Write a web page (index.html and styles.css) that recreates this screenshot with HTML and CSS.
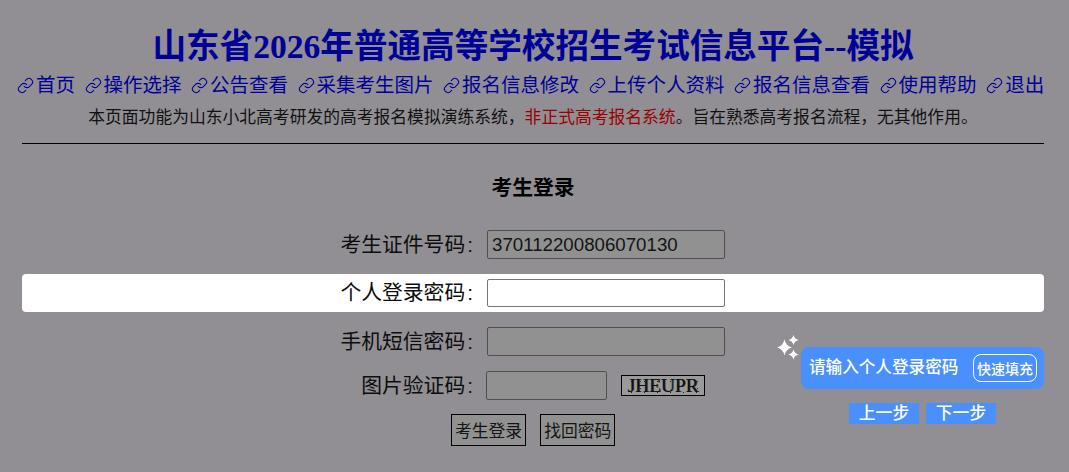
FILE: index.html
```html
<!DOCTYPE html>
<html lang="zh-CN">
<head>
<meta charset="utf-8">
<title>考生登录</title>
<link rel="stylesheet" href="styles.css">
</head>
<body>
<svg class="defs" width="0" height="0"><defs><symbol id="lnk" viewBox="0 0 24 24"><path d="M10 13a5 5 0 0 0 7.540.540l3-3a5 5 0 0 0-7.070-7.070l-1.720 1.710M14 11a5 5 0 0 0-7.540-.540l-3 3a5 5 0 0 0 7.070 7.070l1.710-1.710" fill="none" stroke="currentColor" stroke-width="1.500" stroke-linecap="round" stroke-linejoin="round"/></symbol></defs></svg>
<header class="head">
  <h1 class="title">山东省2026年普通高等学校招生考试信息平台--模拟</h1>
  <nav class="nav">
    <a class="nav-item"><svg class="ico"><use href="#lnk"/></svg>首页</a>
    <a class="nav-item"><svg class="ico"><use href="#lnk"/></svg>操作选择</a>
    <a class="nav-item"><svg class="ico"><use href="#lnk"/></svg>公告查看</a>
    <a class="nav-item"><svg class="ico"><use href="#lnk"/></svg>采集考生图片</a>
    <a class="nav-item"><svg class="ico"><use href="#lnk"/></svg>报名信息修改</a>
    <a class="nav-item"><svg class="ico"><use href="#lnk"/></svg>上传个人资料</a>
    <a class="nav-item"><svg class="ico"><use href="#lnk"/></svg>报名信息查看</a>
    <a class="nav-item"><svg class="ico"><use href="#lnk"/></svg>使用帮助</a>
    <a class="nav-item"><svg class="ico"><use href="#lnk"/></svg>退出</a>
  </nav>
  <p class="notice">本页面功能为山东小北高考研发的高考报名模拟演练系统，<span class="red">非正式高考报名系统</span>。旨在熟悉高考报名流程，无其他作用。</p>
</header>
<hr class="rule">
<main class="login">
  <h2 class="login-title">考生登录</h2>
  <div class="row row-first"><label class="lbl">考生证件号码<span class="colon">:</span></label><input class="field" value="370112200806070130"></div>
  <div class="row row-hi"><label class="lbl">个人登录密码<span class="colon">:</span></label><input class="field field-hi"></div>
  <div class="row"><label class="lbl">手机短信密码<span class="colon">:</span></label><input class="field"></div>
  <div class="row row-cap"><label class="lbl">图片验证码<span class="colon">:</span></label><input class="field field-sm"><span class="cap">JHEUPR</span></div>
  <div class="btns"><button class="btn">考生登录</button><button class="btn">找回密码</button></div>
</main>
<aside class="tip">
  <svg class="spark" viewBox="0 0 26 26"><path fill="#fff" d="M7.500 5.500Q9 12 15 13.500 9 15 7.500 21.500 6 15 0 13.500 6 12 7.500 5.500ZM16.500 1Q17.500 5 21.500 6 17.500 7 16.500 11 15.500 7 11.500 6 15.500 5 16.500 1ZM16.500 15.500Q17.500 19.500 21.500 20.500 17.500 21.500 16.500 25.500 15.500 21.500 11.500 20.500 15.500 19.500 16.500 15.500Z"/></svg>
  <div class="bubble"><span class="bubble-text">请输入个人登录密码</span><button class="fill">快速填充</button></div>
  <div class="steps"><button class="step">上一步</button><button class="step">下一步</button></div>
</aside>
</body>
</html>
```
FILE: styles.css
```css
* { box-sizing: border-box; }
html, body { margin: 0; height: 100%; }
body {
  position: relative;
  width: 1069px;
  height: 472px;
  overflow: hidden;
  padding: 0 25px 0 22px;
  background: #918f94;
  color: #000;
  font-family: "Liberation Sans", "Noto Sans CJK SC", sans-serif;
}
.defs { position: absolute; }
.head { text-align: center; }
.title {
  margin: 0;
  padding-top: 27px;
  font: bold 33.600px/40px "Liberation Serif", "Noto Sans CJK SC", serif;
  color: #000099;
}
.nav {
  display: flex;
  gap: 9.500px;
  margin: 5px -6px 0 -5px;
  font-size: 19.500px;
  line-height: 26px;
  color: #000099;
}
.nav-item { display: flex; align-items: center; white-space: nowrap; }
.ico { width: 17px; height: 17px; margin-right: 2px; flex: none; }
.notice { margin: 9px -10px 0; font-size: 16.800px; line-height: 22px; color: #111; white-space: nowrap; }
.red { color: #990000; }
.rule { margin: 14px 0 0; border: 0; border-top: 1px solid #000; height: 0; }
.login-title {
  margin: 0;
  padding-top: 32px;
  font-size: 20.800px;
  line-height: 24px;
  text-align: center;
  font-weight: bold;
}
.row {
  display: flex;
  align-items: center;
  height: 37px;
  margin-top: 11px;
  border-radius: 4px;
  font-size: 20.800px;
  color: #0d0d0d;
}
.row-first { margin-top: 26px; }
.row-hi { background: #fff; height: 38px; }
.row-cap { margin-top: 7px; }
.lbl { width: 456px; padding-right: 5px; text-align: right; flex: none; white-space: nowrap; line-height: 30px; }
.colon { margin-left: 2px; }
.field {
  width: 238px;
  height: 29px;
  margin-left: 9px;
  padding: 1px 4px;
  border: 1px solid #4f4f4f;
  border-radius: 2px;
  background: #919191;
  color: #141414;
  font: 18.700px "Liberation Sans", sans-serif;
}
.field-hi { background: #fff; border-color: #767676; height: 28px; }
.field-sm { width: 121px; margin-left: 8px; }
.cap {
  width: 84px;
  height: 21px;
  margin-left: 14px;
  border: 1px solid #000;
  background-color: #9a9a9a;
  background-image: radial-gradient(circle, #222 0.800px, transparent 1px), radial-gradient(circle, #333 0.700px, transparent 0.900px);
  background-size: 13px 11px, 19px 7px;
  background-position: 3px 0, 9px 2px;
  font: 19.500px/19px "Liberation Serif", serif;
  color: #111;
  text-shadow: 0.700px 0 0 #333;
  text-align: center;
  letter-spacing: -0.100px;
}
.btns { display: flex; gap: 14px; padding-left: 429px; margin-top: 10px; }
.btn {
  height: 32px;
  padding: 0 3px;
  border: 1px solid #000;
  border-radius: 0;
  background: #919191;
  color: #141414;
  font: 16.800px "Liberation Sans", "Noto Sans CJK SC", sans-serif;
}
.tip {
  position: absolute;
  left: 777px;
  top: 334px;
  width: 267px;
}
.spark { position: absolute; left: 0; top: 0; width: 26px; height: 26px; }
.bubble {
  display: flex;
  align-items: center;
  justify-content: space-between;
  margin: 13px 0 0 24px;
  height: 42px;
  padding: 0 7px 0 8px;
  border-radius: 8px;
  background: #4a90fc;
  color: #fff;
  font-size: 16.600px;
  font-weight: 500;
}
.bubble-text { margin-bottom: 4px; }
.fill {
  height: 28px;
  padding: 0 3px;
  border: 1px solid #fff;
  border-radius: 8px;
  background: transparent;
  color: #fff;
  font: 500 14px "Liberation Sans", "Noto Sans CJK SC", sans-serif;
}
.steps { display: flex; gap: 7px; margin: 14px 0 0 72px; }
.step {
  width: 70px;
  height: 21px;
  padding: 0;
  border: 0;
  background: #4a90fc;
  color: #fff;
  font: 500 16.800px/21px "Liberation Sans", "Noto Sans CJK SC", sans-serif;
}
```
